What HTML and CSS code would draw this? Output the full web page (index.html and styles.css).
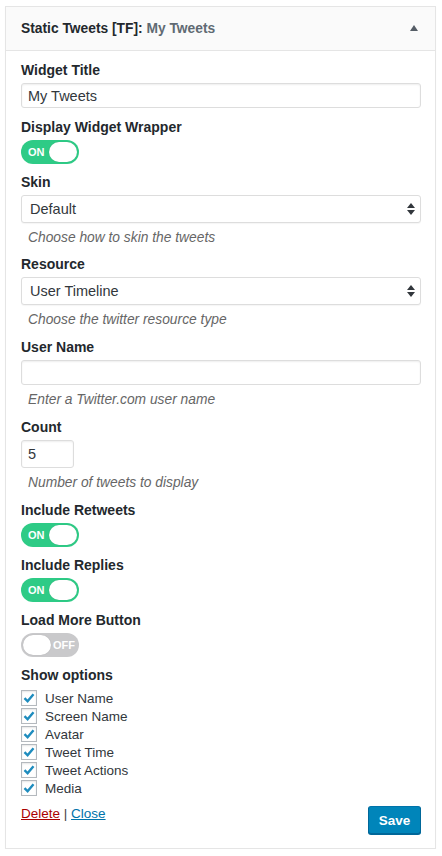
FILE: index.html
```html
<!DOCTYPE html>
<html>
<head>
<meta charset="utf-8">
<link rel="stylesheet" href="styles.css">
</head>
<body>
<div class="widget">
  <div class="widget-top">
    <h3 class="widget-title">Static Tweets [TF]: <span class="in-title">My Tweets</span></h3>
    <svg class="toggle-arrow" width="8" height="6" viewBox="0 0 8 6"><path d="M0 6 L4 0 L8 6 Z" fill="#555d66"/></svg>
  </div>
  <div class="widget-inside">
    <div class="field">
      <label class="label">Widget Title</label>
      <div class="input text">My Tweets</div>
    </div>
    <div class="field toggle-field">
      <label class="label">Display Widget Wrapper</label>
      <div class="switch on"><span class="switch-text">ON</span><span class="knob"></span></div>
    </div>
    <div class="field">
      <label class="label">Skin</label>
      <div class="input select">Default
        <svg class="sel-arrows" width="8" height="12" viewBox="0 0 8 12"><path d="M0 5 L4 0 L8 5 Z M0 7 L4 12 L8 7 Z" fill="#32373c"/></svg>
      </div>
      <p class="desc tight">Choose how to skin the tweets</p>
    </div>
    <div class="field">
      <label class="label">Resource</label>
      <div class="input select">User Timeline
        <svg class="sel-arrows" width="8" height="12" viewBox="0 0 8 12"><path d="M0 5 L4 0 L8 5 Z M0 7 L4 12 L8 7 Z" fill="#32373c"/></svg>
      </div>
      <p class="desc">Choose the twitter resource type</p>
    </div>
    <div class="field">
      <label class="label">User Name</label>
      <div class="input text empty"></div>
      <p class="desc">Enter a Twitter.com user name</p>
    </div>
    <div class="field">
      <label class="label">Count</label>
      <div class="input number">5</div>
      <p class="desc">Number of tweets to display</p>
    </div>
    <div class="field toggle-field">
      <label class="label">Include Retweets</label>
      <div class="switch on"><span class="switch-text">ON</span><span class="knob"></span></div>
    </div>
    <div class="field toggle-field">
      <label class="label">Include Replies</label>
      <div class="switch on"><span class="switch-text">ON</span><span class="knob"></span></div>
    </div>
    <div class="field toggle-field">
      <label class="label">Load More Button</label>
      <div class="switch off"><span class="knob"></span><span class="switch-text">OFF</span></div>
    </div>
    <div class="field">
      <label class="label">Show options</label>
      <ul class="checks">
        <li><span class="cb"><svg width="14" height="14" viewBox="0 0 14 14"><path d="M2.5 7.2 L5.6 10.3 L11.5 3.2" fill="none" stroke="#1e8cbe" stroke-width="2.4"/></svg></span>User Name</li>
        <li><span class="cb"><svg width="14" height="14" viewBox="0 0 14 14"><path d="M2.5 7.2 L5.6 10.3 L11.5 3.2" fill="none" stroke="#1e8cbe" stroke-width="2.4"/></svg></span>Screen Name</li>
        <li><span class="cb"><svg width="14" height="14" viewBox="0 0 14 14"><path d="M2.5 7.2 L5.6 10.3 L11.5 3.2" fill="none" stroke="#1e8cbe" stroke-width="2.4"/></svg></span>Avatar</li>
        <li><span class="cb"><svg width="14" height="14" viewBox="0 0 14 14"><path d="M2.5 7.2 L5.6 10.3 L11.5 3.2" fill="none" stroke="#1e8cbe" stroke-width="2.4"/></svg></span>Tweet Time</li>
        <li><span class="cb"><svg width="14" height="14" viewBox="0 0 14 14"><path d="M2.5 7.2 L5.6 10.3 L11.5 3.2" fill="none" stroke="#1e8cbe" stroke-width="2.4"/></svg></span>Tweet Actions</li>
        <li><span class="cb"><svg width="14" height="14" viewBox="0 0 14 14"><path d="M2.5 7.2 L5.6 10.3 L11.5 3.2" fill="none" stroke="#1e8cbe" stroke-width="2.4"/></svg></span>Media</li>
      </ul>
    </div>
    <div class="controls">
      <div class="links"><a class="delete">Delete</a> | <a class="close">Close</a></div>
      <button class="save">Save</button>
    </div>
  </div>
</div>
</body>
</html>
```

FILE: styles.css
```css
* { box-sizing: border-box; }
html, body { margin: 0; background: #fff; }
body {
  padding: 6px 0 0 5px;
  font-family: "Liberation Sans", Arial, sans-serif;
  color: #23282d;
}
.widget {
  width: 431px;
  border: 1px solid #e5e5e5;
  background: #fff;
  box-shadow: 0 1px 1px rgba(0,0,0,0.04);
}
.widget-top {
  height: 44px;
  background: #fafafa;
  border-bottom: 1px solid #e5e5e5;
  display: flex;
  align-items: center;
  justify-content: space-between;
  padding: 0 17px 0 15px;
}
.widget-title {
  margin: 0;
  font-size: 13.8px;
  font-weight: 700;
  color: #23282d;
}
.in-title { color: #606a73; }
.toggle-arrow { display: block; margin-top: -1px; }
.widget-inside {
  padding: 10px 14px 14px 15px;
  display: flex;
  flex-direction: column;
}
.field { display: flex; flex-direction: column; margin-bottom: 10px; }
.field.toggle-field { margin-bottom: 9px; }
.label {
  font-size: 14px;
  font-weight: 700;
  line-height: 18px;
  margin-bottom: 4px;
  color: #23282d;
}
.input {
  width: 400px;
  height: 25px;
  border: 1px solid #ddd;
  border-radius: 3px;
  box-shadow: inset 0 1px 2px rgba(0,0,0,0.07);
  font-size: 14.5px;
  color: #32373c;
  display: flex;
  align-items: center;
  padding: 0 6px;
  background: #fff;
}
.input.select {
  height: 28px;
  padding: 0 8px;
  box-shadow: 0 1px 1px rgba(0,0,0,0.04);
  justify-content: space-between;
}
.sel-arrows { display: block; margin-right: -3px; }
.input.number { width: 53px; height: 28px; }
.desc {
  margin: 6px 0 -1px 7px;
  font-size: 13.8px;
  line-height: 18px;
  font-style: italic;
  color: #666;
}
.desc.tight { margin-bottom: -2px; }
.switch {
  width: 58px;
  height: 24px;
  border-radius: 12px;
  display: flex;
  align-items: center;
  padding: 0 2px;
  color: #fff;
  font-size: 11px;
  font-weight: 700;
}
.switch.on { background: #2ecb86; justify-content: space-between; padding-left: 7px; }
.switch.off { background: #c9c9cb; justify-content: space-between; padding-right: 4px; }
.knob {
  width: 28px;
  height: 20px;
  border-radius: 10px;
  background: #fff;
  box-shadow: 0 0 1px rgba(0,0,0,0.2);
}
.checks { list-style: none; margin: 1px 0 0; padding: 0; }
.checks li {
  display: flex;
  align-items: center;
  height: 18px;
  font-size: 13.5px;
  color: #32373c;
}
.cb {
  width: 16px;
  height: 16px;
  border: 1px solid #b4b9be;
  background: #fff;
  box-shadow: inset 0 1px 2px rgba(0,0,0,0.1);
  margin-right: 8px;
  display: flex;
  align-items: center;
  justify-content: center;
}
.cb svg { display: block; }
.controls {
  display: flex;
  justify-content: space-between;
  align-items: flex-start;
  margin-top: -1px;
}
.links { font-size: 13.5px; color: #444; line-height: 18px; margin-top: -1px; }
.links a { text-decoration: underline; }
.delete { color: #a00; }
.close { color: #0073aa; }
.save {
  width: 53px;
  height: 28px;
  margin-right: 0;
  background: #0085ba;
  border: 1px solid #0073aa;
  border-color: #0073aa #006799 #006799;
  border-radius: 3px;
  box-shadow: 0 1px 0 #006799;
  color: #fff;
  font-family: "Liberation Sans", Arial, sans-serif;
  font-size: 13.5px;
  font-weight: 700;
  padding: 0;
}
```
